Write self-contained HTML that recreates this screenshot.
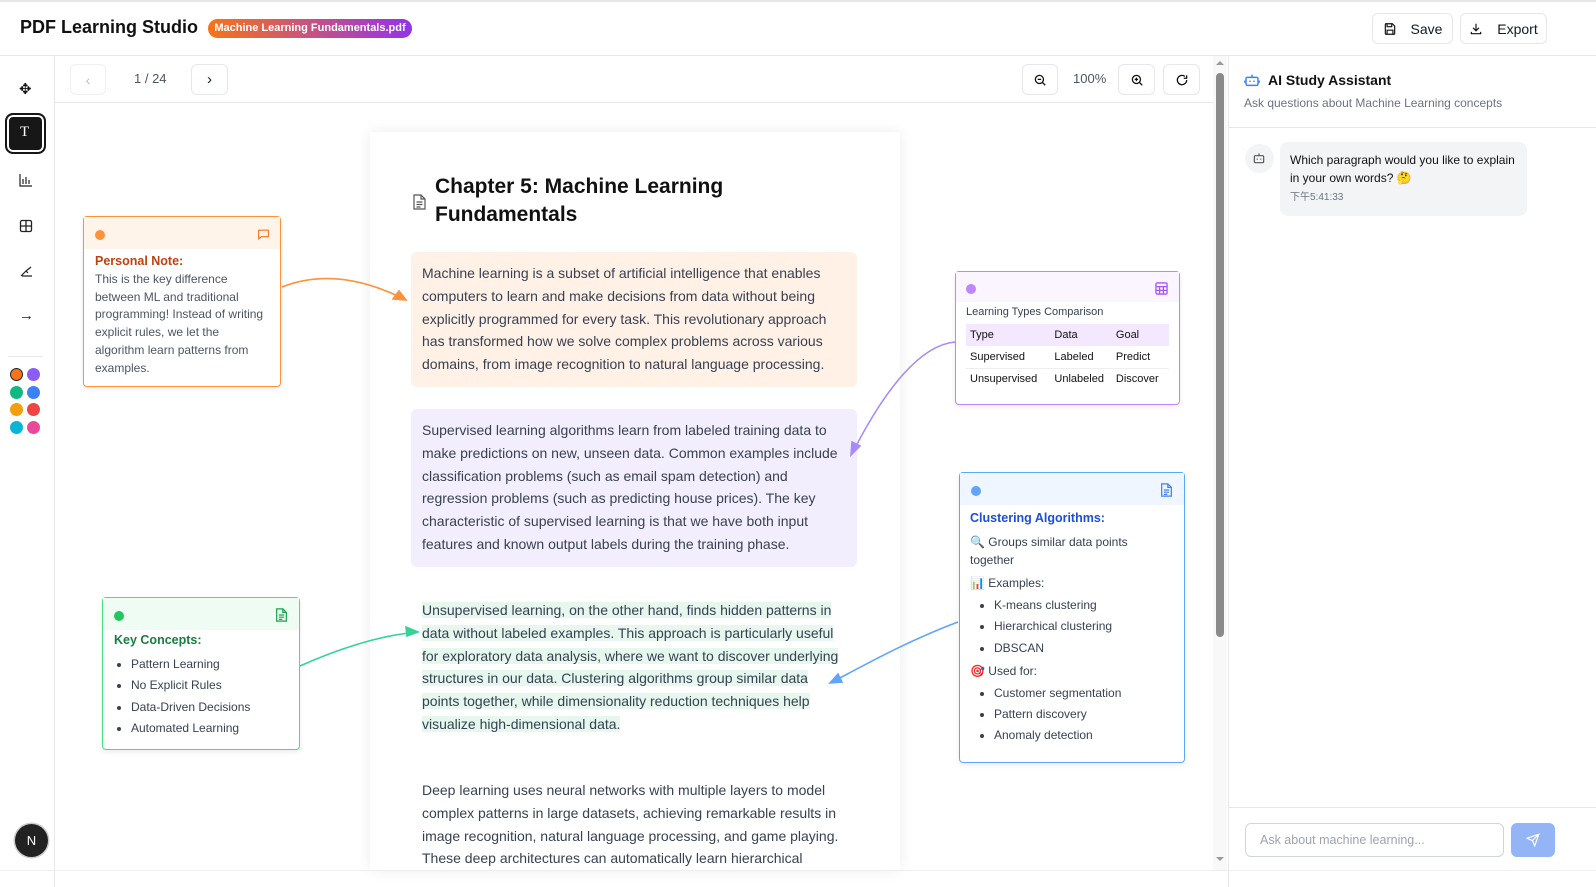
<!DOCTYPE html>
<html style="width:1596px;height:887px;overflow:hidden"><head><meta charset="utf-8"><style>
*{box-sizing:border-box;margin:0;padding:0}
html,body{width:1596px;height:887px;overflow:hidden}
body{background:#fff;font-family:"Liberation Sans","Noto Sans CJK SC",sans-serif;color:#111827}
#w{position:relative;width:1596px;height:887px;overflow:hidden}
.a{position:absolute}
.btn{position:absolute;border:1px solid #e5e7eb;border-radius:6px;background:#fff;display:flex;align-items:center;justify-content:center}
.p{position:absolute;left:411px;width:446px;font-size:14px;line-height:22.8px;color:#374151;padding:10px 11px;border-radius:6px}
.hl{background:#e6f7ee}
.note{position:absolute;background:#fff;border-radius:4px;box-shadow:0 2px 6px rgba(0,0,0,.08)}
.nh{height:32px;position:relative}
.dot{position:absolute;width:10px;height:10px;border-radius:50%;left:11px;top:13px}
ul{padding-left:28px}
.c{position:absolute;width:13px;height:13px;border-radius:50%}
</style></head><body><div id="w">
<div class="a" style="left:0;top:0;width:1596px;height:2px;background:#e5e7eb"></div>
<div class="a" style="left:20px;top:17px;font-size:18px;font-weight:bold;color:#111">PDF Learning Studio</div>
<div class="a" style="left:208px;top:19px;height:19px;width:204px;border-radius:10px;background:linear-gradient(90deg,#f97316,#9333ea);color:#fff;font-size:11px;font-weight:bold;line-height:19px;text-align:center">Machine Learning Fundamentals.pdf</div>
<div class="btn" style="left:1372px;top:13px;width:81px;height:31px;font-size:14px"><svg width="14" height="14" viewBox="0 0 24 24" fill="none" stroke="#111" stroke-width="2" style="margin-right:14px"><path d="M5 3h11l4 4v13a1 1 0 0 1-1 1H5a1 1 0 0 1-1-1V4a1 1 0 0 1 1-1z"/><path d="M7 3v5h8V3M7 21v-7h10v7"/></svg>Save</div>
<div class="btn" style="left:1460px;top:13px;width:87px;height:31px;font-size:14px"><svg width="14" height="14" viewBox="0 0 24 24" fill="none" stroke="#111" stroke-width="2" style="margin-right:14px"><path d="M12 3v12M7 10l5 5 5-5M4 17v3h16v-3"/></svg>Export</div>
<div class="a" style="left:0;top:55px;width:1596px;height:1px;background:#e5e7eb"></div>
<div class="a" style="left:54px;top:56px;width:1px;height:831px;background:#e5e7eb"></div>
<div class="a" style="left:19px;top:80px;font-size:15px;color:#111">✥</div>
<div class="a" style="left:5px;top:113px;width:41px;height:41px;border-radius:8px;background:#171717;border:2px solid #171717;box-shadow:inset 0 0 0 2px #fff"></div>
<div class="a" style="left:20px;top:124px;color:#fff;font-size:15px;font-family:'Liberation Serif',serif">T</div>
<svg class="a" style="left:19px;top:173px" width="14" height="14" viewBox="0 0 14 14" fill="none" stroke="#222" stroke-width="1.2"><path d="M1 1v12h12M4 11V6M7 11V4M10 11V7"/></svg>
<svg class="a" style="left:19px;top:219px" width="14" height="14" viewBox="0 0 14 14" fill="none" stroke="#222" stroke-width="1.3"><rect x="1.5" y="1.5" width="11" height="11" rx="1.5"/><path d="M1.5 7h11M7 1.5v11"/></svg>
<svg class="a" style="left:19px;top:264px" width="14" height="14" viewBox="0 0 14 14" fill="none" stroke="#222" stroke-width="1.2"><path d="M2 12l5-5 2 2M3 12h10M7 7l5-4"/></svg>
<div class="a" style="left:19px;top:307px;font-size:15px;color:#222">→</div>
<div class="a" style="left:8px;top:356px;width:34px;height:1px;background:#e5e7eb"></div>
<div class="c" style="left:10px;top:368px;background:#f97316;border:1.5px solid #222"></div><div class="c" style="left:27px;top:368px;background:#8b5cf6"></div>
<div class="c" style="left:10px;top:386px;background:#10b981"></div><div class="c" style="left:27px;top:386px;background:#3b82f6"></div>
<div class="c" style="left:10px;top:403px;background:#f59e0b"></div><div class="c" style="left:27px;top:403px;background:#ef4444"></div>
<div class="c" style="left:10px;top:421px;background:#06b6d4"></div><div class="c" style="left:27px;top:421px;background:#ec4899"></div>
<div class="a" style="left:15px;top:824px;width:33px;height:33px;border-radius:50%;background:#222;color:#fff;font-size:13px;text-align:center;line-height:33px;box-shadow:0 0 0 1.5px #ccc">N</div>
<div class="a" style="left:55px;top:102px;width:1158px;height:1px;background:#e5e7eb"></div>
<div class="btn" style="left:70px;top:64px;width:36px;height:31px;color:#bbb;font-size:14px;border-color:#f0f0f0">‹</div>
<div class="a" style="left:134px;top:71px;font-size:13px;color:#4b5563">1 / 24</div>
<div class="btn" style="left:191px;top:64px;width:37px;height:31px;font-size:15px">›</div>
<div class="btn" style="left:1022px;top:64px;width:36px;height:31px"><svg width="14" height="14" viewBox="0 0 24 24" fill="none" stroke="#111" stroke-width="2.2"><circle cx="11" cy="11" r="7"/><path d="M8 11h6M16 16l5 5"/></svg></div>
<div class="a" style="left:1073px;top:71px;font-size:13px;color:#4b5563">100%</div>
<div class="btn" style="left:1118px;top:64px;width:37px;height:31px"><svg width="14" height="14" viewBox="0 0 24 24" fill="none" stroke="#111" stroke-width="2.2"><circle cx="11" cy="11" r="7"/><path d="M8 11h6M11 8v6M16 16l5 5"/></svg></div>
<div class="btn" style="left:1163px;top:64px;width:37px;height:31px"><svg width="14" height="14" viewBox="0 0 24 24" fill="none" stroke="#111" stroke-width="2.2"><path d="M20 12a8 8 0 1 1-3-6.2M20 4v5h-5"/></svg></div>
<div class="a" style="left:1213px;top:56px;width:14px;height:815px;background:#f8f8f8"></div>
<div class="a" style="left:1216px;top:73px;width:8px;height:564px;border-radius:4px;background:#8a8a8a"></div>
<div class="a" style="left:1216px;top:61px;width:0;height:0;border:4px solid transparent;border-bottom-color:#999;border-top:0"></div>
<div class="a" style="left:1216px;top:857px;width:0;height:0;border:4px solid transparent;border-top-color:#999;border-bottom:0"></div>
<div class="a" style="left:370px;top:132px;width:530px;height:738px;background:#fff;box-shadow:0 0 14px rgba(0,0,0,.08)"></div>
<svg class="a" style="left:413px;top:194px" width="13" height="16" viewBox="0 0 13 16" fill="none" stroke="#555" stroke-width="1.2"><path d="M1 1h7l4 4v10H1z M8 1v4h4M3.5 8h6M3.5 10.5h6M3.5 13h4"/></svg>
<div class="a" style="left:435px;top:173px;font-size:21px;font-weight:bold;line-height:28px;color:#111">Chapter 5: Machine Learning<br>Fundamentals</div>
<div class="p" style="top:252px;height:135px;background:#fff1e6">Machine learning is a subset of artificial intelligence that enables computers to learn and make decisions from data without being explicitly programmed for every task. This revolutionary approach has transformed how we solve complex problems across various domains, from image recognition to natural language processing.</div>
<div class="p" style="top:409px;height:158px;background:#f3eefd">Supervised learning algorithms learn from labeled training data to make predictions on new, unseen data. Common examples include classification problems (such as email spam detection) and regression problems (such as predicting house prices). The key characteristic of supervised learning is that we have both input features and known output labels during the training phase.</div>
<div class="p" style="top:589px"><span class="hl">Unsupervised learning, on the other hand, finds hidden patterns in data without labeled examples. This approach is particularly useful for exploratory data analysis, where we want to discover underlying structures in our data. Clustering algorithms group similar data points together, while dimensionality reduction techniques help visualize high-dimensional data.</span></div>
<div class="p" style="top:769px;height:101px;overflow:hidden">Deep learning uses neural networks with multiple layers to model complex patterns in large datasets, achieving remarkable results in image recognition, natural language processing, and game playing. These deep architectures can automatically learn hierarchical</div>
<svg class="a" style="left:0;top:0" width="1200" height="870" fill="none" stroke-width="1.6">
<path d="M282 287 C320 272 360 278 400 297" stroke="#fb923c"/><path d="M406 300 l-13 -1 l6 -8z" fill="#fb923c" stroke="#fb923c"/>
<path d="M955 342 C920 345 885 390 855 448" stroke="#a78bfa"/><path d="M851 455 l1 -13 l8 4z" fill="#a78bfa" stroke="#a78bfa"/>
<path d="M300 666 C340 648 380 636 410 633" stroke="#34d399"/><path d="M418 632 l-12 -5 l1 9z" fill="#34d399" stroke="#34d399"/>
<path d="M958 622 C910 640 870 662 838 679" stroke="#60a5fa"/><path d="M830 683 l12 -1 l-4 -8z" fill="#60a5fa" stroke="#60a5fa"/>
</svg>
<div class="note" style="left:83px;top:216px;width:198px;height:171px;border:1px solid #fb923c">
<div class="nh" style="background:#fff4ea"><div class="dot" style="background:#fb923c"></div>
<svg class="a" style="left:173px;top:11px" width="13" height="13" viewBox="0 0 24 24" fill="none" stroke="#f97316" stroke-width="2"><path d="M3 4h18v12H8l-5 4z"/></svg></div>
<div style="padding:4px 11px;font-size:12px;line-height:17.8px;color:#4b5563"><div style="color:#c2410c;font-weight:bold;font-size:12.5px">Personal Note:</div>This is the key difference between ML and traditional programming! Instead of writing explicit rules, we let the algorithm learn patterns from examples.</div></div>
<div class="note" style="left:102px;top:597px;width:198px;height:153px;border:1px solid #4ade80">
<div class="nh" style="background:#effcf3"><div class="dot" style="background:#22c55e;left:11px"></div>
<svg class="a" style="left:172px;top:10px" width="13" height="14" viewBox="0 0 13 16" fill="none" stroke="#16a34a" stroke-width="1.4"><path d="M1 1h7l4 4v10H1z M8 1v4h4M3.5 8h6M3.5 10.5h6M3.5 13h4"/></svg></div>
<div style="padding:3px 11px;font-size:12px;color:#374151"><div style="color:#15803d;font-weight:bold;font-size:12.5px;margin-bottom:7px">Key Concepts:</div>
<ul style="padding-left:17px;line-height:21.3px"><li>Pattern Learning</li><li>No Explicit Rules</li><li>Data-Driven Decisions</li><li>Automated Learning</li></ul></div></div>
<div class="note" style="left:955px;top:271px;width:225px;height:134px;border:1px solid #c084fc">
<div class="nh" style="background:#faf5ff;height:30px"><div class="dot" style="background:#c084fc;left:10px;top:12px"></div>
<svg class="a" style="left:199px;top:10px" width="13" height="13" viewBox="0 0 14 14" fill="none" stroke="#a855f7" stroke-width="1.4"><rect x="1" y="1" width="12" height="12" rx="1.5"/><path d="M1 5h12M1 9h12M5 5v8M9 5v8"/></svg></div>
<div style="padding:4px 10px;font-size:11px;color:#374151"><div style="margin-bottom:6px">Learning Types Comparison</div>
<table style="border-collapse:collapse;width:203px;font-size:11px;color:#111"><tr style="background:#f3e8ff;height:22px"><td style="padding-left:4px">Type</td><td>Data</td><td>Goal</td></tr>
<tr style="height:22px;border-bottom:1px solid #eee"><td style="padding-left:4px">Supervised</td><td>Labeled</td><td>Predict</td></tr>
<tr style="height:22px"><td style="padding-left:4px">Unsupervised</td><td>Unlabeled</td><td>Discover</td></tr></table></div></div>
<div class="note" style="left:959px;top:472px;width:226px;height:291px;border:1px solid #60a5fa">
<div class="nh" style="background:#eff6ff"><div class="dot" style="background:#60a5fa;left:11px;top:13px"></div>
<svg class="a" style="left:200px;top:10px" width="13" height="14" viewBox="0 0 13 16" fill="none" stroke="#3b82f6" stroke-width="1.4"><path d="M1 1h7l4 4v10H1z M8 1v4h4M3.5 8h6M3.5 10.5h6M3.5 13h4"/></svg></div>
<div style="padding:4px 10px;font-size:12px;color:#374151;line-height:18px"><div style="color:#1d4ed8;font-weight:bold;font-size:12.5px;margin-bottom:6px">Clustering Algorithms:</div>
<div>🔍 Groups similar data points together</div><div style="margin-top:5px">📊 Examples:</div>
<ul style="padding-left:24px;line-height:21.3px;margin-top:3px"><li>K-means clustering</li><li>Hierarchical clustering</li><li>DBSCAN</li></ul>
<div style="margin-top:3px">🎯 Used for:</div>
<ul style="padding-left:24px;line-height:21.3px;margin-top:3px"><li>Customer segmentation</li><li>Pattern discovery</li><li>Anomaly detection</li></ul></div></div>
<div class="a" style="left:1228px;top:56px;width:1px;height:831px;background:#e5e7eb"></div>
<svg class="a" style="left:1244px;top:72px" width="16" height="16" viewBox="0 0 24 24" fill="none" stroke="#3b82f6" stroke-width="2.2"><rect x="3" y="8" width="18" height="12" rx="2"/><path d="M12 8V4M9 13v2M15 13v2M1 13v3M23 13v3"/></svg>
<div class="a" style="left:1268px;top:72px;font-size:14px;font-weight:bold;color:#111">AI Study Assistant</div>
<div class="a" style="left:1244px;top:96px;font-size:12px;color:#6b7280">Ask questions about Machine Learning concepts</div>
<div class="a" style="left:1229px;top:127px;width:367px;height:1px;background:#e5e7eb"></div>
<div class="a" style="left:1245px;top:144px;width:29px;height:29px;border-radius:50%;background:#f3f4f6"></div>
<svg class="a" style="left:1252px;top:151px" width="14" height="14" viewBox="0 0 24 24" fill="none" stroke="#555" stroke-width="2"><rect x="4" y="8" width="16" height="12" rx="2"/><path d="M12 8V4M9 13v2M15 13v2"/></svg>
<div class="a" style="left:1280px;top:142px;width:247px;height:74px;border-radius:8px;background:#f3f4f6;padding:10px 10px;font-size:12px;line-height:17.5px;color:#111">Which paragraph would you like to explain in your own words? 🤔<div style="font-size:10px;color:#6b7280;margin-top:2px">下午5:41:33</div></div>
<div class="a" style="left:1229px;top:807px;width:367px;height:1px;background:#e5e7eb"></div>
<div class="a" style="left:1245px;top:823px;width:259px;height:34px;border:1px solid #d1d5db;border-radius:6px;font-size:12.5px;color:#9ca3af;padding:9px 14px">Ask about machine learning...</div>
<div class="a" style="left:1511px;top:823px;width:44px;height:34px;border-radius:6px;background:#93b4f5;display:flex;align-items:center;justify-content:center"><svg width="14" height="14" viewBox="0 0 24 24" fill="none" stroke="#fff" stroke-width="2"><path d="M22 2L11 13M22 2l-7 20-4-9-9-4z"/></svg></div>
<div class="a" style="left:0;top:870px;width:1596px;height:1px;background:#eee"></div>
</div></body></html>
